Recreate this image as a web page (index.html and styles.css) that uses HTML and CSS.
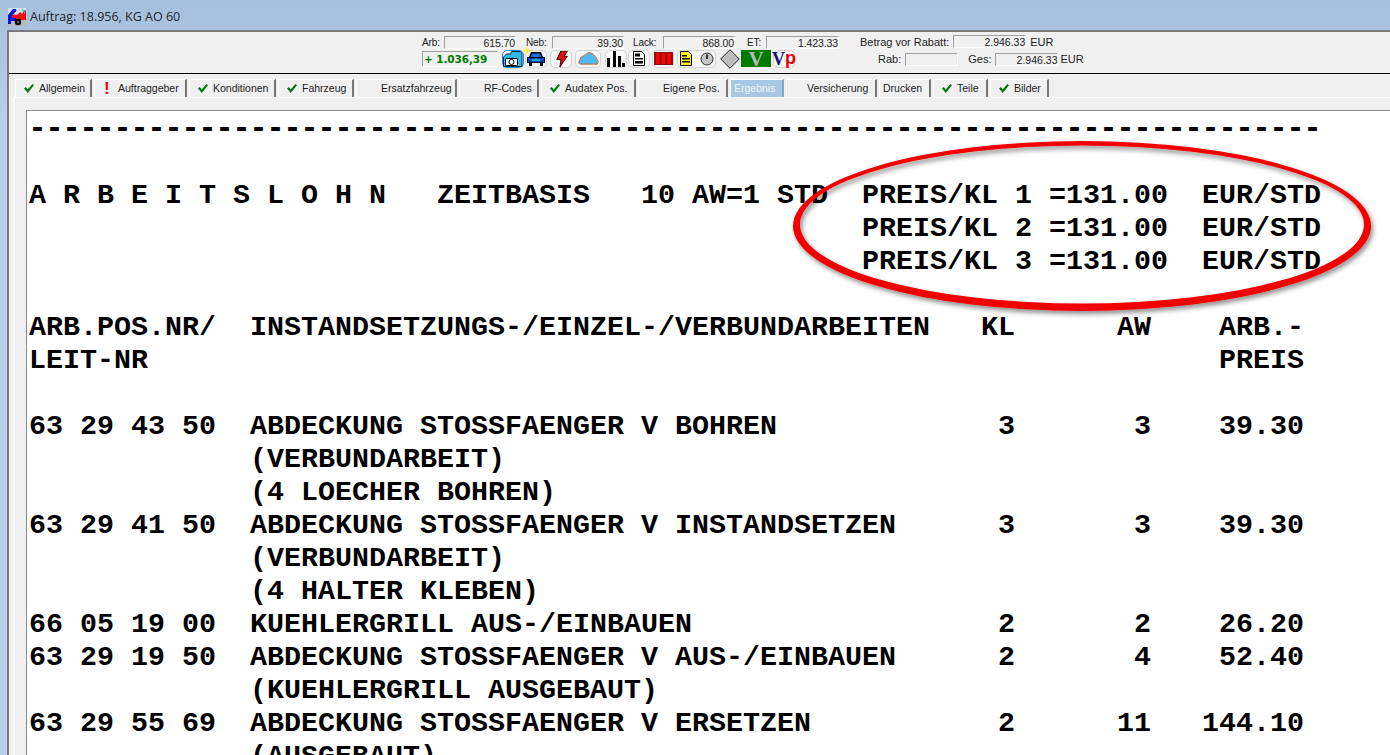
FILE: index.html

```html
<!DOCTYPE html>
<html lang="de">
<head>
  <meta charset="UTF-8" />
  <title>Auftrag: 18.956, KG AO 60</title>
  <link rel="stylesheet" href="styles.css">
</head>
<body>
  <svg width="0" height="0" class="defs">
    <symbol id="check" viewBox="0 0 10 9"><path d="M0 4.500l1.800-1.500 1.900 2.400L8.400 0 10 1.200 3.800 9z" fill="#007a10"/></symbol>
  </svg>

  <div class="titlebar">
    <svg class="app-icon" width="18" height="18" viewBox="0 0 18 18">
      <rect x="0" y="0" width="18" height="18" fill="#b9b9b9"/>
      <rect x="0" y="0" width="18" height="6" fill="#cfe0ee"/>
      <path d="M2 7l5-5h2L5 7h4l3-3 2 2 2-4 2 1v9H0V7z" fill="#f00d0d"/>
      <path d="M0 16V7l5-6h3v2L4 7v3h4v3H3v3z" fill="#0018d8"/>
      <path d="M14 1l3 4" stroke="#16d0d0" stroke-width="1.200" fill="none"/>
      <circle cx="10" cy="14" r="3.200" fill="#000"/>
      <circle cx="10" cy="14" r="1" fill="#999"/>
    </svg>
    <span>Auftrag: 18.956, KG AO 60</span>
  </div>

  <div class="window">
    <div class="head">
      <div class="head-left">
        <div class="stats">
          <label class="lbl-arb">Arb:</label><div class="field f-72">615.70</div>
          <label class="lbl-neb">Neb:</label><div class="field f-72">39.30</div>
          <label class="lbl-lack">Lack:</label><div class="field f-72">868.00</div>
          <label class="lbl-et">ET:</label><div class="field f-73">1.423.33</div>
        </div>
        <div class="tools">
          <div class="total">+ 1.036,39</div>
          <div class="btn btn-active">
            <svg width="20" height="16" viewBox="0 0 20 16"><path d="M.5 15.500V6l3-3h4l1-2.500h9l1.500 2v13z" fill="#35b6ea" stroke="#0d2a3a"/><rect x="2.500" y="7.500" width="12" height="7" rx="1" fill="#f4f4f4" stroke="#000"/><circle cx="8.500" cy="11" r="2.500" fill="#fff" stroke="#000"/></svg>
          </div>
          <div class="btn btn-car">
            <svg class="star" width="10" height="10" viewBox="0 0 9 9"><path d="M4.500 0l1 3 3.500 1.500-3.500 1-1 3.500-1-3.500-3.500-1 3.500-1.500z" fill="#ffe94a"/></svg>
            <svg width="18" height="14" viewBox="0 0 18 14"><path d="M4 0h10l2 5h2v6h-2v3h-3v-3H5v3H2v-3H0V5h2z" fill="#000"/><path d="M5 1.500h8l1.200 3.500H3.800z" fill="#1f6fe0"/><rect x="1" y="6" width="16" height="4" fill="#0f3fd0"/><rect x="5" y="7" width="8" height="2" fill="#18b0b0"/></svg>
          </div>
          <div class="btn btn-bolt">
            <svg width="13" height="16" viewBox="0 0 11 15"><path d="M5 0h6L8 5h3L4 15l1-7H1z" fill="#e01010" stroke="#200" stroke-width="0.900"/></svg>
          </div>
          <div class="btn btn-wide">
            <svg width="23" height="14" viewBox="0 0 23 15"><path d="M1 12l2-6 5-3 4-3 4 2 3 3 3 5-1 3H3z" fill="#53b8ef" stroke="#d8622a"/></svg>
          </div>
          <div class="btn btn-bars">
            <svg width="20" height="16" viewBox="0 0 20 16"><path d="M1 7h3v9H1zM7 0h3v16H7zM12 5h3v11h-3zM16 12h3v4h-3z" fill="#000"/></svg>
          </div>
          <div class="btn">
            <svg width="12" height="15" viewBox="0 0 12 15"><path d="M.5.500h8l3 3v11H.5z" fill="#fff" stroke="#000"/><path d="M2 2.500h5v3H2zM2 7h8v1.500H2zM2 10h8v2.500H2z" fill="#000"/></svg>
          </div>
          <div class="btn btn-red">
            <svg width="19" height="13" viewBox="0 0 19 13"><rect width="19" height="13" fill="#8a1010"/><path d="M2 1h3.500v11H2zM7.700 1h3.500v11H7.700zM13.500 1H17v11h-3.500z" fill="#f00"/></svg>
          </div>
          <div class="btn btn-double">
            <svg width="12" height="15" viewBox="0 0 12 15"><path d="M.5.500h8l3 3v11H.5z" fill="#ffef1e" stroke="#000"/><path d="M2 4h5v1.500H2zM2 7h8v1.500H2zM2 10h8v1.500H2z" fill="#000"/></svg>
            <svg width="14" height="14" viewBox="0 0 14 14"><circle cx="7" cy="7" r="6" fill="#c4c4c4" stroke="#333"/><path d="M7 2.500V7" stroke="#000" stroke-width="1.500"/></svg>
          </div>
          <svg class="diamond" width="20" height="20" viewBox="0 0 20 20"><path d="M10 .700L19.300 10 10 19.300.7 10z" fill="#bdbdbd" stroke="#222"/></svg>
          <div class="v-badge">V</div>
          <div class="btn btn-vp"><span class="vp-v">V</span><span class="vp-p">p</span></div>
        </div>
      </div>
      <div class="head-right">
        <div class="sum-row">
          <label>Betrag vor Rabatt:</label><div class="field f-73">2.946.33</div><span class="cur">EUR</span>
        </div>
        <div class="sum-row sum-row-2">
          <label>Rab:</label><div class="field f-53"></div>
          <label class="lbl-ges">Ges:</label><div class="field f-63">2.946.33</div><span class="cur">EUR</span>
        </div>
      </div>
    </div>

    <div class="tabs">
      <div class="tab t-77"><svg class="check" width="10" height="9"><use href="#check"/></svg>Allgemein</div>
      <div class="tab t-93 tab-warn"><span class="warn">!</span>Auftraggeber</div>
      <div class="tab t-87"><svg class="check" width="10" height="9"><use href="#check"/></svg>Konditionen</div>
      <div class="tab t-76"><svg class="check" width="10" height="9"><use href="#check"/></svg>Fahrzeug</div>
      <div class="tab t-101 plain">Ersatzfahrzeug</div>
      <div class="tab t-80 plain">RF-Codes</div>
      <div class="tab t-95"><svg class="check" width="10" height="9"><use href="#check"/></svg>Audatex Pos.</div>
      <div class="tab t-90 plain">Eigene Pos.</div>
      <div class="tab t-54 tab-current">Ergebnis</div>
      <div class="tab t-91 plain plain-short">Versicherung</div>
      <div class="tab t-52 tight">Drucken</div>
      <div class="tab t-55"><svg class="check" width="10" height="9"><use href="#check"/></svg>Teile</div>
      <div class="tab t-59"><svg class="check" width="10" height="9"><use href="#check"/></svg>Bilder</div>
    </div>

    <div class="panel">
      <pre class="report"><span class="rule">----------------------------------------------------------------------------</span>

A R B E I T S L O H N   ZEITBASIS   10 AW=1 STD  PREIS/KL 1 =131.00  EUR/STD
                                                 PREIS/KL 2 =131.00  EUR/STD
                                                 PREIS/KL 3 =131.00  EUR/STD

ARB.POS.NR/  INSTANDSETZUNGS-/EINZEL-/VERBUNDARBEITEN   KL      AW    ARB.-
LEIT-NR                                                               PREIS

63 29 43 50  ABDECKUNG STOSSFAENGER V BOHREN             3       3    39.30
             (VERBUNDARBEIT)
             (4 LOECHER BOHREN)
63 29 41 50  ABDECKUNG STOSSFAENGER V INSTANDSETZEN      3       3    39.30
             (VERBUNDARBEIT)
             (4 HALTER KLEBEN)
66 05 19 00  KUEHLERGRILL AUS-/EINBAUEN                  2       2    26.20
63 29 19 50  ABDECKUNG STOSSFAENGER V AUS-/EINBAUEN      2       4    52.40
             (KUEHLERGRILL AUSGEBAUT)
63 29 55 69  ABDECKUNG STOSSFAENGER V ERSETZEN           2      11   144.10
             (AUSGEBAUT)</pre>
    </div>
  </div>

  <!-- red marker drawn over the screenshot -->
  <svg class="marker" width="610" height="200" viewBox="0 0 610 200">
    <defs>
      <filter id="soft" x="-5%" y="-10%" width="110%" height="120%">
        <feDropShadow dx="2" dy="3" stdDeviation="2.500" flood-color="#000" flood-opacity="0.450"/>
      </filter>
    </defs>
    <path fill="#f00000" fill-rule="evenodd" filter="url(#soft)"
      d="M3 92a289 85 0 1 0 578 0a289 85 0 1 0 -578 0z
         M10 90.500a282 79 0 1 0 564 0a282 79 0 1 0 -564 0z"/>
  </svg>
</body>
</html>
```

FILE: styles.css

```css
html, body { margin: 0; height: 100%; overflow: hidden; }
body {
  position: relative;
  font-family: "Liberation Sans", Arial, sans-serif;
  background: linear-gradient(180deg, #a5bfdc 0, #b7d0e8 120px, #b9d1e9 100%);
  color: #000;
}
.defs { position: absolute; }

.titlebar {
  height: 30px;
  display: flex;
  align-items: center;
  padding-left: 8px;
  gap: 4px;
  font-family: "Open Sans", sans-serif;
  font-size: 12.500px;
  color: #1c2530;
  box-sizing: border-box;
  padding-top: 3px;
}
.app-icon { flex: none; }

.window {
  margin-left: 7px;
  height: 725px;
  box-sizing: border-box;
  border-top: 2px solid #7a7a7a;
  border-left: 2px solid #7a7a7a;
  background: #f0f0f0;
}

.head {
  height: 41px;
  border-bottom: 1px solid #000;
  display: flex;
  padding-left: 413px;
  font-size: 10px;
  letter-spacing: -0.1px;
  color: #222;
}
.head-left { width: 439px; flex: none; }
.head-right { width: 240px; flex: none; font-size: 11px; letter-spacing: 0; }

.stats { display: flex; align-items: center; height: 17px; padding-top: 2px; }
.stats label { display: block; }
.lbl-arb { width: 22px; }
.lbl-neb { width: 26px; margin-left: 10px; }
.lbl-lack { width: 30px; margin-left: 9px; }
.lbl-et { width: 19px; margin-left: 12px; }

.field {
  height: 13px;
  flex: none;
  box-sizing: border-box;
  border: 1px solid;
  border-color: #a0a0a0 #fff #fff #a0a0a0;
  text-align: right;
  line-height: 13px;
  font-size: 10.500px;
  white-space: nowrap;
}
.f-72 { width: 72px; }
.f-73 { width: 73px; }
.f-53 { width: 53px; }
.f-63 { width: 63px; }

.tools { display: flex; align-items: center; height: 19px; margin-top: -2px; }
.total {
  flex: none;
  width: 76px;
  height: 16px;
  box-sizing: border-box;
  border: 1px solid;
  border-color: #a0a0a0 #fff #fff #a0a0a0;
  color: #007a00;
  font-family: "DejaVu Sans", sans-serif;
  font-weight: bold;
  font-size: 10.500px;
  line-height: 14px;
  margin-right: 4px;
  padding-left: 1px;
}
.btn {
  position: relative;
  flex: none;
  width: 22px;
  height: 18px;
  margin-right: 1px;
  border-radius: 5px;
  border: 1px solid #d4d4d4;
  background: #f8f8f8;
  box-sizing: border-box;
  display: flex;
  align-items: center;
  justify-content: center;
  gap: 8px;
}
.btn-active { border-color: #1a8ce0; }
.btn-bolt { margin-left: 2px; }
.btn-wide { width: 26px; margin-left: 2px; margin-right: 3px; }
.btn-bars { margin-left: 1px; }
.btn-red { margin-left: 1px; }
.btn-double { width: 39px; margin-left: 2px; margin-right: 3px; }
.star { position: absolute; left: -4px; top: -5px; }
.diamond { flex: none; margin-left: 1px; }
.v-badge {
  flex: none;
  width: 30px;
  height: 17px;
  margin: 0 2px 0 1px;
  background: #007a00;
  color: #b8b8b8;
  font-family: "Liberation Serif", serif;
  font-weight: bold;
  font-size: 21px;
  line-height: 18px;
  text-align: center;
}
.btn-vp {
  font-weight: bold;
  line-height: 16px;
  gap: 0;
  align-items: flex-start;
}
.vp-v { color: #10107a; font-family: "Liberation Serif", serif; font-size: 18px; line-height: 17px; }
.vp-p { color: #f00000; font-size: 18px; line-height: 15px; }

.sum-row { display: flex; align-items: center; height: 15px; padding-top: 2px; margin-left: -1px; }
.sum-row label { margin-right: 4px; }
.sum-row-2 { height: 16px; margin-left: 17px; }
.sum-row .lbl-ges { margin-left: 10px; margin-right: 4px; }
.cur { margin-left: 4px; }
.sum-row-2 .cur { margin-left: 2px; }

.tabs {
  display: flex;
  gap: 2px;
  padding: 5px 0 0 6px;
  height: 18px;
  font-size: 10.500px;
  color: #222;
}
.tab {
  flex: none;
  height: 18px;
  box-sizing: border-box;
  border-top: 1px solid #fff;
  border-left: 1px solid #fff;
  border-right: 2px solid #777;
  line-height: 17px;
  white-space: nowrap;
  padding-left: 8px;
  display: flex;
  align-items: center;
}
.t-77 { width: 77px; } .t-93 { width: 93px; } .t-87 { width: 87px; }
.t-76 { width: 76px; } .t-101 { width: 101px; } .t-80 { width: 80px; }
.t-95 { width: 95px; } .t-90 { width: 90px; } .t-54 { width: 54px; }
.t-91 { width: 91px; } .t-52 { width: 52px; } .t-55 { width: 55px; }
.t-59 { width: 59px; }
.plain { padding-left: 24px; }
.plain-short { padding-left: 20px; }
.tight { padding-left: 3px; }
.check { flex: none; margin-right: 5px; }
.tab-warn { padding-left: 9px; }
.warn { color: #f00000; width: 14px; font-weight: bold; font-size: 17px; }
.tab-current {
  background: #a6c8e4;
  color: #eef4fa;
  padding-left: 3px;
  border-color: #fff #7fa7c6 #fff #fff;
}

.panel {
  border-top: 1px solid #fff;
  border-left: 1px solid #fff;
  margin-left: 4px;
  padding: 12px 0 0 12px;
}
.report {
  margin: 0;
  height: 645px;
  box-sizing: border-box;
  overflow: hidden;
  background: #fff;
  border-top: 1px solid #8c8c8c;
  border-left: 1px solid #8c8c8c;
  padding: 0 0 0 2px;
  font-family: "Liberation Mono", "Courier New", monospace;
  font-weight: bold;
  font-size: 28.330px;
  line-height: 33px;
  color: #000;
}
.rule { font-family: "DejaVu Sans Mono", monospace; font-size: 28.240px; }

.marker { position: absolute; left: 790px; top: 134px; pointer-events: none; }
```
